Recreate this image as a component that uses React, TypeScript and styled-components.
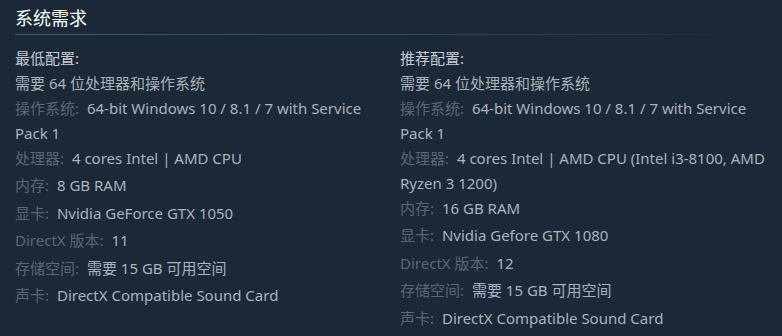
import styled, { createGlobalStyle } from 'styled-components';

const GlobalStyle = createGlobalStyle`
    body {
        margin: 0;
        background-color: #1b2838;
        font-family: "Noto Sans", "Noto Sans CJK SC", sans-serif;
    }
`;

type Req = { label?: string; value: string; loose?: boolean };

const minimum: Req[] = [
    { value: '需要 64 位处理器和操作系统' },
    { label: '操作系统:', value: '64-bit Windows 10 / 8.1 / 7 with Service Pack 1' },
    { label: '处理器:', value: '4 cores Intel | AMD CPU' },
    { label: '内存:', value: '8 GB RAM', loose: true },
    { label: '显卡:', value: 'Nvidia GeForce GTX 1050', loose: true },
    { label: 'DirectX 版本:', value: '11', loose: true },
    { label: '存储空间:', value: '需要 15 GB 可用空间', loose: true },
    { label: '声卡:', value: 'DirectX Compatible Sound Card', loose: true },
];

const recommended: Req[] = [
    { value: '需要 64 位处理器和操作系统' },
    { label: '操作系统:', value: '64-bit Windows 10 / 8.1 / 7 with Service Pack 1' },
    { label: '处理器:', value: '4 cores Intel | AMD CPU (Intel i3-8100, AMD Ryzen 3 1200)' },
    { label: '内存:', value: '16 GB RAM' },
    { label: '显卡:', value: 'Nvidia Gefore GTX 1080', loose: true },
    { label: 'DirectX 版本:', value: '12', loose: true },
    { label: '存储空间:', value: '需要 15 GB 可用空间', loose: true },
    { label: '声卡:', value: 'DirectX Compatible Sound Card', loose: true },
];

function ReqColumn({ title, items }: { title: string; items: Req[] }) {
    return (
        <Column>
            <ColumnTitle>{title}</ColumnTitle>
            <ReqList>
                {items.map((item, i) => (
                    <ReqItem key={i} $loose={item.loose}>
                        {item.label && <Label>{item.label}</Label>}
                        {item.label ? ' ' : ''}
                        {item.value}
                    </ReqItem>
                ))}
            </ReqList>
        </Column>
    );
}

export default function App() {
    return (
        <>
            <GlobalStyle />
            <Section>
                <SectionTitle>系统需求</SectionTitle>
                <Columns>
                    <ReqColumn title="最低配置:" items={minimum} />
                    <ReqColumn title="推荐配置:" items={recommended} />
                </Columns>
            </Section>
        </>
    );
}

const Section = styled.section`
    width: 782px;
    height: 336px;
    padding-left: 15px;
    box-sizing: border-box;
    overflow: hidden;
`;

const SectionTitle = styled.h2`
    margin: 0;
    padding: 6px 0 4px;
    font-size: 18px;
    font-weight: 400;
    line-height: 24px;
    color: #ffffff;
    border-bottom: 1px solid transparent;
    border-image: linear-gradient(to right, #435a6f 0%, #34495d 50%, rgba(27, 40, 56, 0) 100%) 1;
`;

const Columns = styled.div`
    display: flex;
    gap: 15px;
    margin-top: 10.5px;
`;

const Column = styled.div`
    width: 370px;
    flex-shrink: 0;
`;

const ColumnTitle = styled.div`
    font-size: 15px;
    line-height: 25px;
    color: #c6ccd2;
`;

const ReqList = styled.ul`
    list-style: none;
    margin: 0;
    padding: 0;
`;

const ReqItem = styled.li<{ $loose?: boolean }>`
    font-size: 15px;
    line-height: 25px;
    color: #acb2b8;
    padding-top: ${({ $loose }) => ($loose ? '2.5px' : '0')};
`;

const Label = styled.strong`
    font-weight: 400;
    color: #5c6670;
    margin-right: 4px;
`;
